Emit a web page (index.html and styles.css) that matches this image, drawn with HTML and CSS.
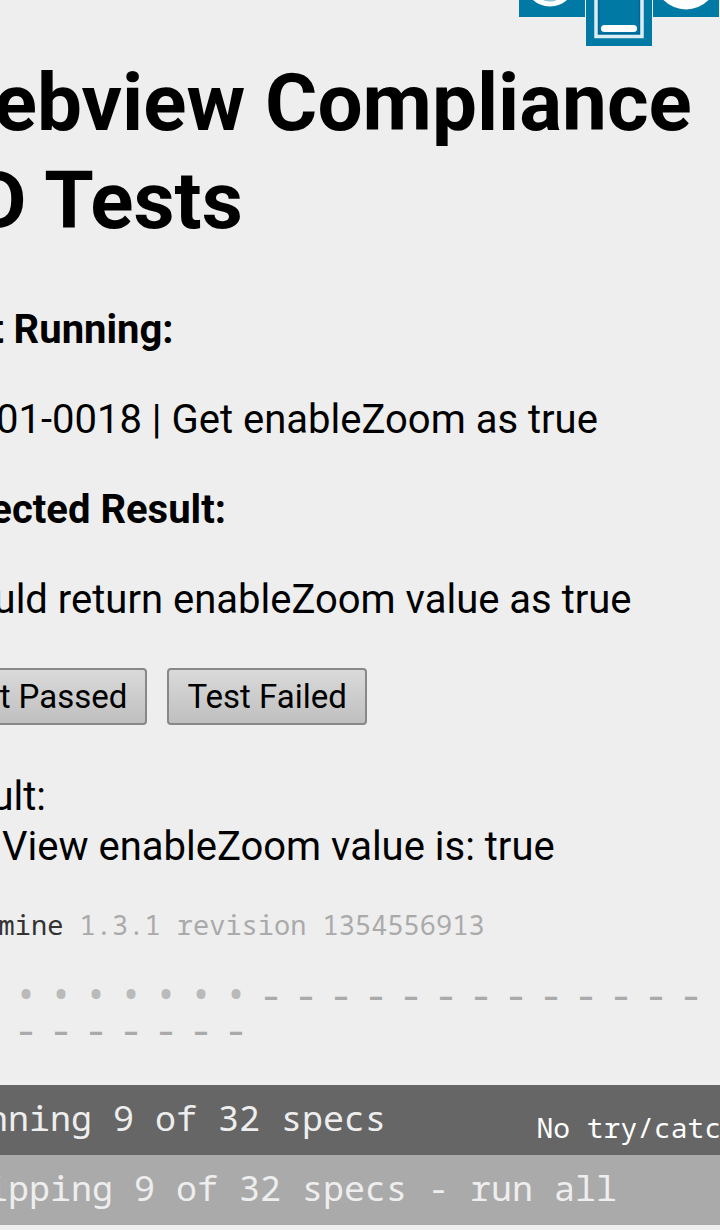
FILE: index.html
```html
<!DOCTYPE html>
<html lang="en">
<head>
<meta charset="utf-8">
<meta name="viewport" content="width=device-width, initial-scale=1">
<title>Webview Compliance Tests</title>
<link rel="stylesheet" href="styles.css">
</head>
<body>
<header class="toolbar">
  <svg class="tile" width="66" height="17" viewBox="0 0 66 17" aria-hidden="true"><path fill="#007aa5" d="M0 0h66v17H0z"/><circle cx="31" cy="-19" r="25.500" fill="#fff"/><circle cx="31" cy="-15" r="16.500" fill="#8cc3d7"/></svg>
  <svg class="tile" width="66" height="46" viewBox="0 0 66 46" aria-hidden="true"><path fill="#007aa5" d="M0 0h66v46H0z"/><path fill="none" stroke="#006394" stroke-width="1.500" d="M12.500-2v35.500h41V-2"/><path fill="none" stroke="#dbedf3" stroke-width="3.500" d="M10-2v38.500h46V-2"/><path stroke="#fff" stroke-width="7" stroke-linecap="round" d="M18.500 28.500h29"/></svg>
  <svg class="tile" width="66" height="17" viewBox="0 0 66 17" aria-hidden="true"><path fill="#007aa5" d="M0 0h66v17H0z"/><circle cx="33" cy="-22" r="31.500" fill="#fff"/></svg>
</header>
<main class="page">
  <h1 class="title">Webview Compliance TD Tests</h1>
  <h2 class="label">Test Running:</h2>
  <p class="text">WW01-0018 | Get enableZoom as true</p>
  <h2 class="label">Expected Result:</h2>
  <p class="text">Should return enableZoom value as true</p>
  <div class="actions">
    <button class="button" type="button">Test Passed</button>
    <button class="button" type="button">Test Failed</button>
  </div>
  <p class="result">Result:<br>The View enableZoom value is: true</p>
  <section class="reporter">
    <p class="version"><span class="name">Jasmine</span> 1.3.1 revision 1354556913</p>
    <ul class="symbols">
      <li class="dot">•</li><li class="dot">•</li><li class="dot">•</li><li class="dot">•</li><li class="dot">•</li><li class="dot">•</li><li class="dot">•</li><li class="dot">•</li><li class="dot">•</li>
      <li>-</li><li>-</li><li>-</li><li>-</li><li>-</li><li>-</li><li>-</li><li>-</li><li>-</li><li>-</li><li>-</li><li>-</li><li>-</li>
      <li>-</li><li>-</li><li>-</li><li>-</li><li>-</li><li>-</li><li>-</li><li>-</li><li>-</li>
    </ul>
    <div class="bar running"><span>Running 9 of 32 specs</span><label class="option">No try/catch <input type="checkbox"></label></div>
    <div class="bar skipping"><a class="link" href="#">Skipping 9 of 32 specs - run all</a></div>
  </section>
</main>
</body>
</html>
```
FILE: styles.css
```css
* {
  box-sizing: border-box;
}

body {
  margin: 0;
  background: #eee;
  color: #000;
  font: 40px/50px Roboto, sans-serif;
  overflow-x: hidden;
}

.toolbar {
  display: flex;
  justify-content: flex-end;
  align-items: flex-start;
  gap: 1px;
  padding-right: 1px;
}

.tile {
  display: block;
}

/* The page is panned to the right, so its left edge is out of view. */
.page {
  margin-left: -75px;
}

.title {
  margin: 8px 0 55px;
  font-size: 80px;
  line-height: 98px;
}

.label,
.text {
  margin: 0 0 40px;
  font-size: 40px;
}

.actions {
  display: flex;
  gap: 20px;
  margin-top: 43px;
  padding-left: 2px;
}

.button {
  height: 57px;
  padding: 0 18px;
  border: 2px solid #888;
  border-radius: 4px;
  background: linear-gradient(#dadada, #bfbfbf);
  color: #000;
  font: 33px/50px Roboto, sans-serif;
  white-space: nowrap;
}

.result {
  margin: 47px 0 0;
}

.reporter {
  font-family: "Droid Sans Mono", "Noto Sans Mono", "DejaVu Sans Mono", monospace;
  white-space: nowrap;
}

.version {
  margin: 35px 0 0;
  padding-left: 25px;
  color: #aaa;
  font-size: 27px;
  line-height: 35px;
}

.name {
  color: #333;
}

.symbols {
  display: flex;
  flex-wrap: wrap;
  margin: 34px 0 0;
  padding: 0 0 0 19px;
  list-style: none;
  color: #aaa;
  font-size: 40px;
  line-height: 35px;
}

.symbols li {
  width: 35px;
}

.symbols .dot {
  color: #bababa;
}

.bar {
  display: flex;
  height: 70px;
  padding-left: 20px;
  color: #eee;
  font-size: 35px;
  line-height: 66px;
}

.running {
  margin-top: 39px;
  background: #666;
}

.skipping {
  background: #aaa;
}

.option {
  display: flex;
  align-items: center;
  gap: 12px;
  height: 70px;
  padding: 14px 0 0;
  margin: 0 -50px 0 auto;
  color: #fff;
  font-size: 28px;
}

.link {
  color: #eee;
  text-decoration: none;
}
```
